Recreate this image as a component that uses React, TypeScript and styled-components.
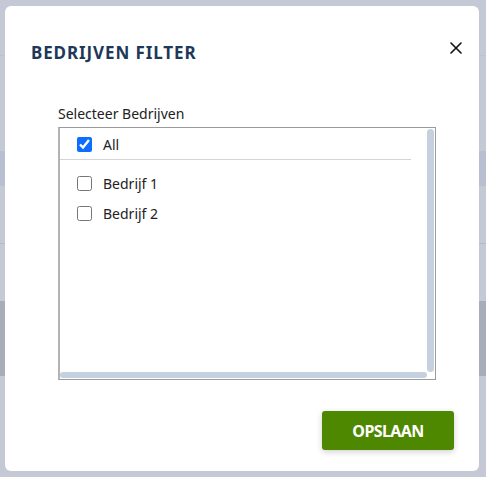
import React, { useState } from "react";
import styled, { createGlobalStyle } from "styled-components";

const GlobalStyle = createGlobalStyle`
  html, body {
    margin: 0;
    padding: 0;
  }
  body {
    font-family: "Noto Sans", "Open Sans", sans-serif;
    color: #212529;
  }
`;

const Page = styled.div`
  width: 486px;
  height: 477px;
  box-sizing: border-box;
  padding: 6px 7px 6px 5px;
  background:
    linear-gradient(#bdc2cf, #bdc2cf) 0 55px / 100% 1px no-repeat,
    linear-gradient(#b8bfd1, #b8bfd1) 0 151px / 100% 35px no-repeat,
    linear-gradient(#b5bac7, #b5bac7) 0 243px / 100% 1px no-repeat,
    linear-gradient(#a9adb9, #a9adb9) 0 301px / 100% 75px no-repeat,
    #c5c9d5;
`;

const Modal = styled.div`
  width: 474px;
  height: 465px;
  box-sizing: border-box;
  background: #fff;
  border-radius: 6px;
  display: flex;
  flex-direction: column;
`;

const Header = styled.div`
  height: 98px;
  box-sizing: border-box;
  padding: 35px 16px 0 26px;
  display: flex;
  align-items: flex-start;
  justify-content: space-between;
`;

const Title = styled.h2`
  margin: 0;
  font-size: 17px;
  font-weight: 700;
  letter-spacing: 0.9px;
  color: #1d3858;
  line-height: 24px;
`;

const CloseButton = styled.button`
  border: none;
  background: none;
  padding: 0;
  width: 14px;
  height: 14px;
  display: flex;
  align-items: center;
  justify-content: center;
  cursor: pointer;
  color: #111;
`;

const Body = styled.div`
  padding: 0 43px 0 53px;
`;

const Label = styled.div`
  font-size: 14px;
  line-height: 20px;
  color: #222;
  margin-bottom: 3px;
`;

const ListBox = styled.div`
  width: 378px;
  height: 253px;
  box-sizing: border-box;
  border: 1px solid #9b9b9b;
  border-left: 2px solid #b3b3b3;
  display: grid;
  grid-template-columns: 1fr 8px;
  grid-template-rows: 1fr 7px;
  overflow: hidden;
`;

const ListContent = styled.div`
  padding-top: 1px;
  overflow: hidden;
`;

const ScrollTrackV = styled.div`
  padding: 1px 1px 0 0;
  display: flex;
`;

const ScrollTrackH = styled.div`
  padding: 0 0 1px 0;
  display: flex;
`;

const Thumb = styled.div`
  flex: 1;
  background: #c5d1de;
  border-radius: 4px;
`;

const Row = styled.label<{ $divider?: boolean }>`
  display: flex;
  align-items: center;
  gap: 11px;
  height: 30px;
  padding-left: 17px;
  margin-right: 16px;
  font-size: 14px;
  color: #222;
  cursor: pointer;
  border-bottom: ${(p) => (p.$divider ? "1px solid #d4d4d4" : "none")};
  margin-bottom: ${(p) => (p.$divider ? "8px" : "0")};
`;

const Check = styled.input`
  width: 15px;
  height: 15px;
  margin: 0;
  accent-color: #0d6efd;
`;

const Footer = styled.div`
  margin-top: auto;
  padding: 0 25px 21px 0;
  display: flex;
  justify-content: flex-end;
`;

const SaveButton = styled.button`
  width: 132px;
  height: 39px;
  border: none;
  border-radius: 3px;
  background: #4d8800;
  color: #fff;
  font-family: "Noto Sans", "Open Sans", sans-serif;
  font-size: 16px;
  font-weight: 700;
  letter-spacing: -0.6px;
  box-shadow: 0 2px 6px rgba(0, 0, 0, 0.18);
  cursor: pointer;
`;

const companies = ["Bedrijf 1", "Bedrijf 2"];

export default function App() {
  const [all, setAll] = useState(true);
  const [picked, setPicked] = useState<string[]>([]);

  const toggle = (name: string) =>
    setPicked((cur) =>
      cur.includes(name) ? cur.filter((c) => c !== name) : [...cur, name]
    );

  return (
    <>
      <GlobalStyle />
      <Page>
        <Modal>
          <Header>
            <Title>BEDRIJVEN FILTER</Title>
            <CloseButton aria-label="Sluiten">
              <svg width="12" height="12" viewBox="0 0 12 12">
                <path
                  d="M1 1L11 11M11 1L1 11"
                  stroke="currentColor"
                  strokeWidth="1.6"
                  strokeLinecap="round"
                />
              </svg>
            </CloseButton>
          </Header>
          <Body>
            <Label>Selecteer Bedrijven</Label>
            <ListBox>
              <ListContent>
                <Row $divider>
                  <Check
                    type="checkbox"
                    checked={all}
                    onChange={() => setAll(!all)}
                  />
                  All
                </Row>
                {companies.map((c) => (
                  <Row key={c}>
                    <Check
                      type="checkbox"
                      checked={picked.includes(c)}
                      onChange={() => toggle(c)}
                    />
                    {c}
                  </Row>
                ))}
              </ListContent>
              <ScrollTrackV>
                <Thumb />
              </ScrollTrackV>
              <ScrollTrackH>
                <Thumb />
              </ScrollTrackH>
            </ListBox>
          </Body>
          <Footer>
            <SaveButton>OPSLAAN</SaveButton>
          </Footer>
        </Modal>
      </Page>
    </>
  );
}
